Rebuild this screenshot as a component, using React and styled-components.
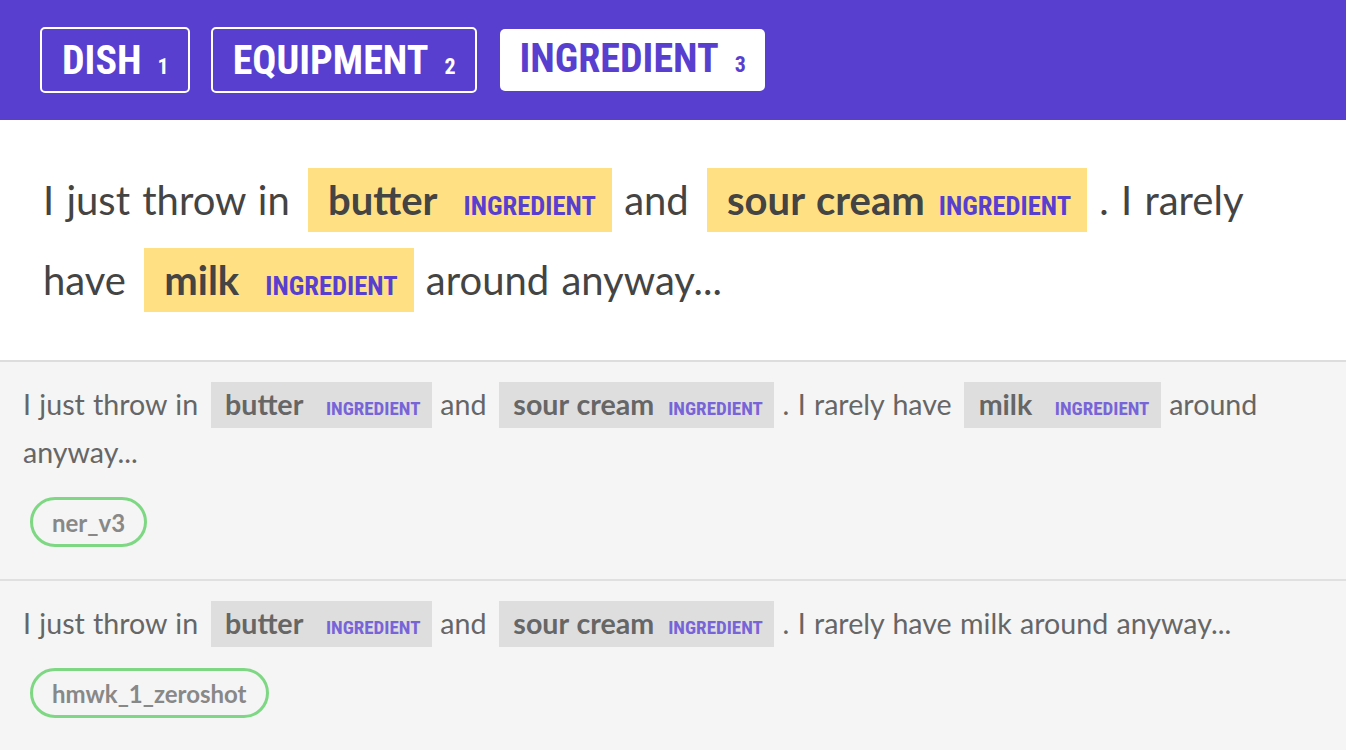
import React from "react";
import styled, { createGlobalStyle } from "styled-components";

const labels = [
  { id: "dish", name: "DISH", key: 1 },
  { id: "equipment", name: "EQUIPMENT", key: 2 },
  { id: "ingredient", name: "INGREDIENT", key: 3 }
];

// ws = the token carries its trailing whitespace inside the highlight
const mainTokens = [
  "I just throw in ",
  { text: "butter", label: "INGREDIENT", ws: true },
  " and ",
  { text: "sour cream", label: "INGREDIENT" },
  " . I rarely have ",
  { text: "milk", label: "INGREDIENT", ws: true },
  " around anyway..."
];

const answers = [
  {
    session: "ner_v3",
    tokens: mainTokens
  },
  {
    session: "hmwk_1_zeroshot",
    tokens: [
      "I just throw in ",
      { text: "butter", label: "INGREDIENT", ws: true },
      " and ",
      { text: "sour cream", label: "INGREDIENT" },
      " . I rarely have milk around anyway..."
    ]
  }
];

const GlobalStyle = createGlobalStyle`
  body {
    margin: 0;
    background: #f5f5f5;
    font-family: Lato, "Open Sans", sans-serif;
  }
`;

const Highlighted = ({ tokens, big }) => (
  <>
    {tokens.map((t, i) => {
      if (typeof t === "string") return <React.Fragment key={i}>{t}</React.Fragment>;
      return (
        <Mark key={i} $big={big}>
          <TokenText $ws={t.ws}>{t.text}</TokenText>
          <Label $big={big}>{t.label}</Label>
        </Mark>
      );
    })}
  </>
);

const App = () => {
  const active = "ingredient";
  return (
    <Wrapper>
      <GlobalStyle />
      <Header>
        {labels.map(l => (
          <LabelButton key={l.id} $active={l.id === active}>
            {l.name}
            <Key>{l.key}</Key>
          </LabelButton>
        ))}
      </Header>

      <MainCard>
        <Highlighted tokens={mainTokens} big />
      </MainCard>

      {answers.map((a, i) => (
        <AnswerCard key={i}>
          <AnswerText>
            <Highlighted tokens={a.tokens} />
          </AnswerText>
          <Session>{a.session}</Session>
        </AnswerCard>
      ))}
    </Wrapper>
  );
};

const Wrapper = styled.div`
  width: 1346px;
  min-height: 750px;
  background: #f5f5f5;
`;

const Header = styled.div`
  height: 120px;
  box-sizing: border-box;
  background: #583fcf;
  display: flex;
  align-items: flex-start;
  gap: 21px;
  padding: 27px 0 0 40px;
`;

const LabelButton = styled.div`
  box-sizing: border-box;
  height: ${p => (p.$active ? "62px" : "66px")};
  margin: ${p => (p.$active ? "2px" : "0")};
  padding: 0 19px 0 20px;
  border: ${p => (p.$active ? "none" : "2px solid #fff")};
  border-radius: 5px;
  background: ${p => (p.$active ? "#fff" : "transparent")};
  color: ${p => (p.$active ? "#583fcf" : "#fff")};
  display: flex;
  align-items: baseline;
  padding-top: ${p => (p.$active ? "6px" : "8px")};
  font-family: "Roboto Condensed", Roboto, "DejaVu Sans Condensed", sans-serif;
  font-stretch: condensed;
  font-weight: 700;
  font-size: 40px;
  line-height: 48px;
`;

const Key = styled.span`
  font-size: 22px;
  margin-left: 16px;
`;

const MainCard = styled.div`
  background: #fff;
  padding: 40px 40px 40px 43px;
  font-size: 40px;
  line-height: 80px;
  word-spacing: 2px;
  color: #444;
  border-bottom: 2px solid #ddd;
`;

const Mark = styled.mark`
  display: inline-block;
  background: ${p => (p.$big ? "#ffe184" : "#dedede")};
  color: inherit;
  font-weight: 700;
  line-height: 1.6em;
  padding: 0 0.4em 0 0.5em;
  margin-left: 0.15em;
`;

const TokenText = styled.span`
  padding-right: ${p => (p.$ws ? "0.3em" : "0")};
`;

const Label = styled.span`
  font-family: "Roboto Condensed", Roboto, "DejaVu Sans Condensed", sans-serif;
  font-stretch: condensed;
  font-weight: 700;
  font-size: 0.665em;
  line-height: 1;
  word-spacing: 0;
  color: ${p => (p.$big ? "#583fcf" : "#7764d8")};
  margin-left: 14px;
`;

const AnswerCard = styled.div`
  background: #f5f5f5;
  border-bottom: 2px solid #e0e0e0;
  padding: 18px 40px 32px 23px;
  &:last-child {
    border-bottom: none;
  }
`;

const AnswerText = styled.div`
  font-size: 28.6px;
  line-height: 48px;
  word-spacing: 1px;
  color: #666;
`;

const Session = styled.div`
  display: flex;
  align-items: center;
  width: fit-content;
  margin: 21px 0 0 7px;
  padding: 0 19px 0 19px;
  height: 50px;
  box-sizing: border-box;
  border: 3px solid #7ed883;
  border-radius: 25px;
  font-size: 24px;
  font-weight: 700;
  color: #888;
`;

export default App;
